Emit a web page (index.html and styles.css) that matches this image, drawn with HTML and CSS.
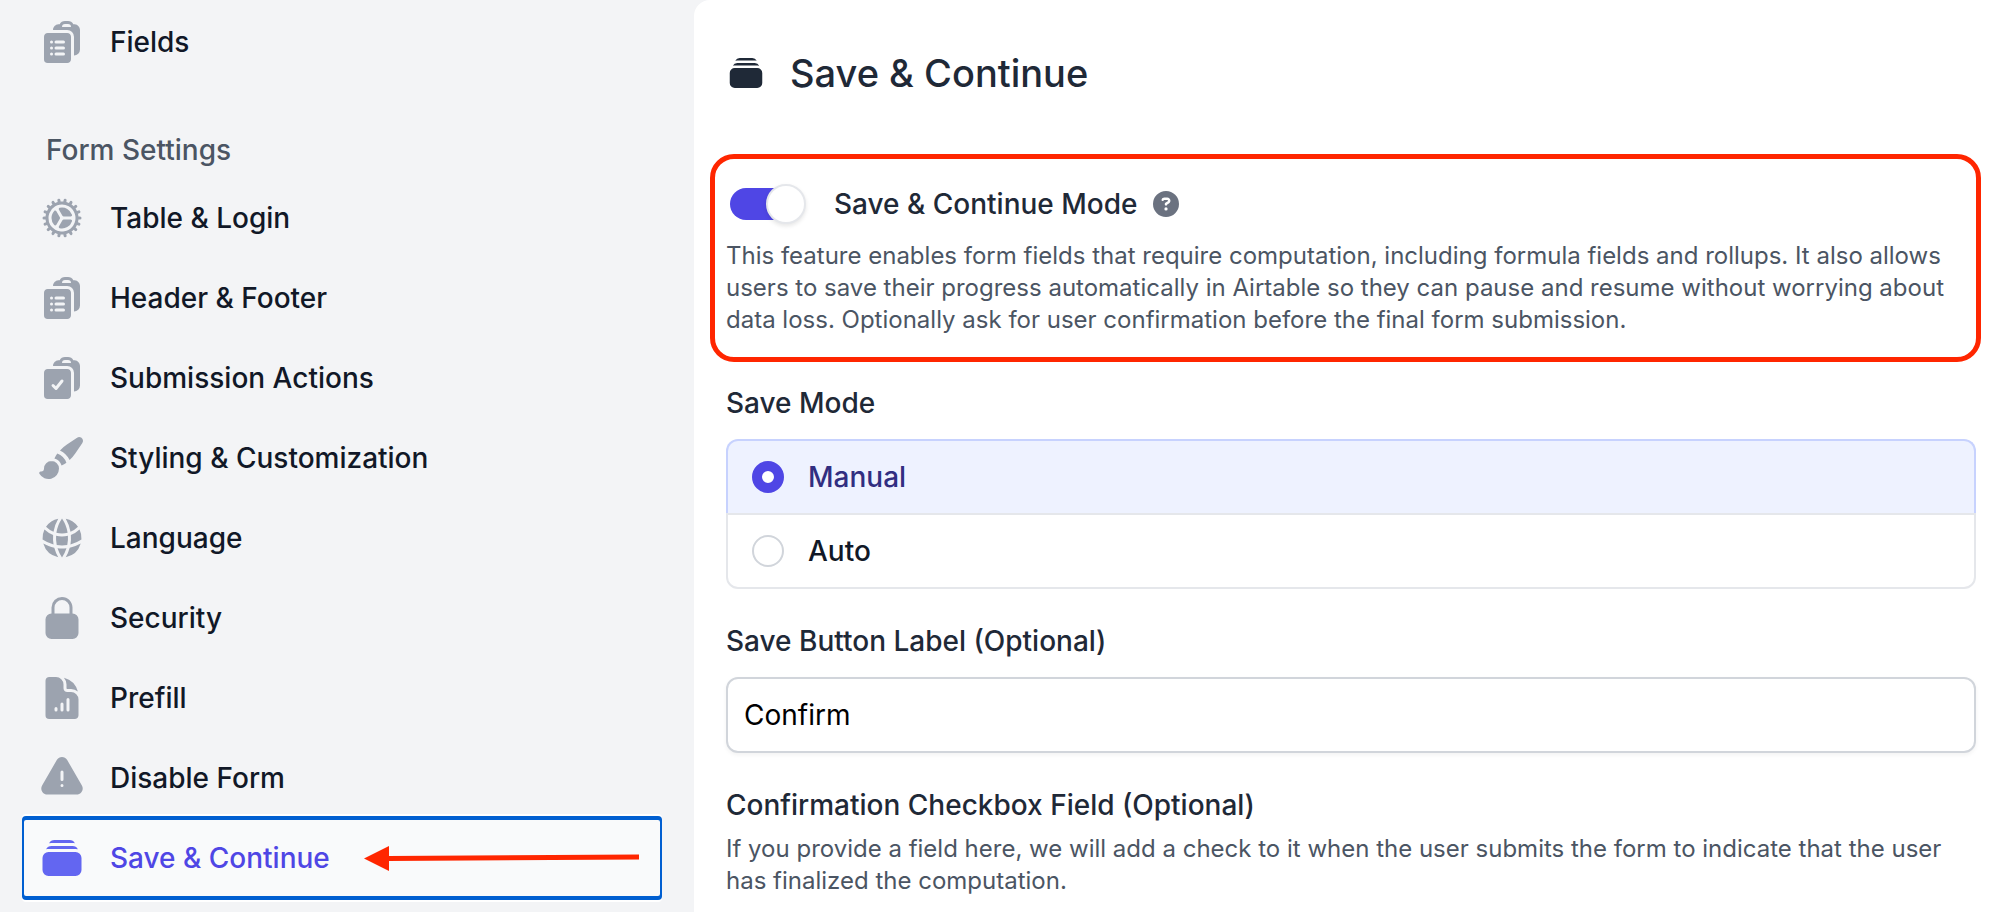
FILE: index.html
```html
<!DOCTYPE html>
<html lang="en">
<head>
<meta charset="utf-8">
<meta name="viewport" content="width=device-width, initial-scale=1">
<title>Save &amp; Continue</title>
<link rel="stylesheet" href="styles.css">
</head>
<body>
<svg class="sprite" aria-hidden="true">
  <symbol id="clipboard-back" viewBox="0 0 24 24"><path fill-rule="evenodd" d="M7.502 6h7.128A3.375 3.375 0 0118 9.375v9.375a3 3 0 003-3V6.108c0-1.505-1.125-2.811-2.664-2.94a48.972 48.972 0 00-.673-.05A3 3 0 0015 1.5h-1.5a3 3 0 00-2.663 1.618c-.225.015-.45.032-.673.05C8.662 3.295 7.554 4.542 7.502 6zM13.5 3A1.5 1.5 0 0012 4.5h4.5A1.5 1.5 0 0015 3h-1.5z"/></symbol>
  <symbol id="clipboard-list" viewBox="0 0 24 24"><use href="#clipboard-back"/><path fill-rule="evenodd" d="M3 9.375C3 8.339 3.84 7.5 4.875 7.5h9.75c1.036 0 1.875.84 1.875 1.875v11.25c0 1.035-.84 1.875-1.875 1.875h-9.75A1.875 1.875 0 013 20.625V9.375zM6 12a.75.75 0 01.75-.75h.008a.75.75 0 01.75.75v.008a.75.75 0 01-.75.75H6.75a.75.75 0 01-.75-.75V12zm2.25 0a.75.75 0 01.75-.75h3.75a.75.75 0 010 1.5H9a.75.75 0 01-.75-.75zM6 15a.75.75 0 01.75-.75h.008a.75.75 0 01.75.75v.008a.75.75 0 01-.75.75H6.75a.75.75 0 01-.75-.75V15zm2.25 0a.75.75 0 01.75-.75h3.75a.75.75 0 010 1.5H9a.75.75 0 01-.75-.75zM6 18a.75.75 0 01.75-.75h.008a.75.75 0 01.75.75v.008a.75.75 0 01-.75.75H6.75a.75.75 0 01-.75-.75V18zm2.25 0a.75.75 0 01.75-.75h3.75a.75.75 0 010 1.5H9a.75.75 0 01-.75-.75z"/></symbol>
  <symbol id="clipboard-check" viewBox="0 0 24 24"><use href="#clipboard-back"/><path fill-rule="evenodd" d="M3 9.375C3 8.339 3.84 7.5 4.875 7.5h9.75c1.036 0 1.875.84 1.875 1.875v11.25c0 1.035-.84 1.875-1.875 1.875h-9.75A1.875 1.875 0 013 20.625V9.375zm9.586 4.594a.75.75 0 00-1.172-.938l-2.476 3.096-.908-.907a.75.75 0 00-1.06 1.06l1.5 1.5a.75.75 0 001.116-.062l3-3.75z"/></symbol>
  <symbol id="cog" viewBox="0 0 24 24"><path d="M17.004 10.407c.138.435-.216.842-.672.842h-3.465a.75.75 0 01-.65-.375l-1.732-3c-.229-.396-.053-.907.393-1.004a5.252 5.252 0 016.126 3.537zM8.12 8.464c.307-.338.838-.235 1.066.16l1.732 3a.75.75 0 010 .75l-1.732 3.001c-.229.396-.76.498-1.067.16A5.231 5.231 0 016.75 12c0-1.362.519-2.603 1.37-3.536zM10.878 17.13c-.447-.097-.623-.608-.394-1.003l1.733-3.003a.75.75 0 01.65-.375h3.465c.457 0 .81.408.672.843a5.252 5.252 0 01-6.126 3.538z"/><path fill-rule="evenodd" d="M21 12.75a.75.75 0 100-1.5h-.783a8.22 8.22 0 00-.237-1.357l.734-.267a.75.75 0 10-.513-1.41l-.735.268a8.24 8.24 0 00-.689-1.191l.6-.504a.75.75 0 10-.964-1.149l-.6.504a8.3 8.3 0 00-1.054-.885l.391-.678a.75.75 0 10-1.299-.75l-.39.677a8.188 8.188 0 00-1.295-.471l.136-.77a.75.75 0 00-1.477-.26l-.136.77a8.364 8.364 0 00-1.377 0l-.136-.77a.75.75 0 10-1.477.26l.136.77c-.448.121-.88.28-1.294.47l-.39-.676a.75.75 0 00-1.3.75l.392.678a8.29 8.29 0 00-1.054.885l-.6-.504a.75.75 0 00-.965 1.149l.6.503a8.243 8.243 0 00-.689 1.192L3.8 8.217a.75.75 0 10-.513 1.41l.735.267a8.222 8.222 0 00-.238 1.355h-.783a.75.75 0 000 1.5h.783c.042.464.122.917.238 1.356l-.735.268a.75.75 0 10.513 1.41l.735-.268c.197.417.428.816.69 1.192l-.6.504a.75.75 0 10.963 1.149l.601-.505c.326.323.679.62 1.054.885l-.392.68a.75.75 0 101.3.75l.39-.679c.414.192.847.35 1.294.471l-.136.771a.75.75 0 101.477.26l.137-.772a8.376 8.376 0 001.376 0l.136.773a.75.75 0 101.477-.26l-.136-.772a8.19 8.19 0 001.294-.47l.391.677a.75.75 0 101.3-.75l-.393-.679a8.282 8.282 0 001.054-.885l.601.504a.75.75 0 10.964-1.15l-.6-.503a8.24 8.24 0 00.69-1.191l.735.268a.75.75 0 10.512-1.41l-.734-.268c.115-.438.195-.892.237-1.356h.784zm-2.657-3.06a6.744 6.744 0 00-1.19-2.053 6.784 6.784 0 00-1.82-1.51A6.704 6.704 0 0012 5.25a6.801 6.801 0 00-1.225.111 6.7 6.7 0 00-2.15.792 6.784 6.784 0 00-2.952 3.489.758.758 0 01-.036.099A6.74 6.74 0 005.251 12a6.739 6.739 0 003.355 5.835l.01.006.01.005a6.706 6.706 0 002.203.802c.007 0 .014.002.021.004a6.792 6.792 0 002.301 0l.022-.004a6.707 6.707 0 002.228-.816 6.781 6.781 0 001.762-1.483l.009-.01.009-.012a6.744 6.744 0 001.18-2.064c.253-.708.39-1.47.39-2.264a6.74 6.74 0 00-.408-2.308z"/></symbol>
  <symbol id="brush" viewBox="0 0 24 24"><path d="M20.599 1.5c-.376 0-.743.111-1.055.32l-5.08 3.385a18.747 18.747 0 00-3.471 2.987 10.04 10.04 0 014.815 4.815 18.748 18.748 0 002.987-3.472l3.386-5.079A1.902 1.902 0 0020.599 1.5zm-8.3 14.025a18.76 18.76 0 001.896-1.207 8.026 8.026 0 00-4.513-4.513A18.75 18.75 0 008.475 11.7l-.278.5a5.26 5.26 0 013.601 3.602l.502-.278zM6.75 13.5A3.75 3.75 0 003 17.25a1.5 1.5 0 01-1.601 1.497.75.75 0 00-.7 1.123 5.25 5.25 0 009.8-2.62 3.75 3.75 0 00-3.75-3.75z"/></symbol>
  <symbol id="globe" viewBox="0 0 24 24"><path d="M21.721 12.752a9.711 9.711 0 00-.945-5.003 12.754 12.754 0 01-4.339 2.708 18.991 18.991 0 01-.214 4.772 17.165 17.165 0 005.498-2.477zM14.634 15.55a17.324 17.324 0 00.332-4.647c-.952.227-1.945.347-2.966.347-1.021 0-2.014-.12-2.966-.347a17.515 17.515 0 00.332 4.647 17.385 17.385 0 005.268 0zM9.772 17.119a18.963 18.963 0 004.456 0A17.182 17.182 0 0112 21.724a17.18 17.18 0 01-2.228-4.605zM7.777 15.23a18.87 18.87 0 01-.214-4.774 12.753 12.753 0 01-4.34-2.708 9.711 9.711 0 00-.944 5.004 17.165 17.165 0 005.498 2.477zM21.356 14.752a9.765 9.765 0 01-7.478 6.817 18.64 18.64 0 001.988-4.718 18.627 18.627 0 005.49-2.098zM2.644 14.752c1.682.971 3.53 1.688 5.49 2.099a18.64 18.64 0 001.988 4.718 9.765 9.765 0 01-7.478-6.816zM13.878 2.43a9.755 9.755 0 016.116 3.986 11.267 11.267 0 01-3.746 2.504 18.63 18.63 0 00-2.37-6.49zM12 2.276a17.152 17.152 0 012.805 7.121c-.897.23-1.837.353-2.805.353-.968 0-1.908-.122-2.805-.353A17.151 17.151 0 0112 2.276zM10.122 2.43a18.629 18.629 0 00-2.37 6.49 11.266 11.266 0 01-3.746-2.504 9.754 9.754 0 016.116-3.985z"/></symbol>
  <symbol id="lock" viewBox="0 0 24 24"><path fill-rule="evenodd" d="M12 1.5a5.25 5.25 0 00-5.25 5.25v3a3 3 0 00-3 3v6.75a3 3 0 003 3h10.5a3 3 0 003-3v-6.75a3 3 0 00-3-3v-3c0-2.9-2.35-5.25-5.25-5.25zm3.75 8.25v-3a3.75 3.75 0 10-7.5 0v3h7.5z"/></symbol>
  <symbol id="chart" viewBox="0 0 24 24"><path fill-rule="evenodd" d="M5.625 1.5H9a3.75 3.75 0 013.75 3.75v1.875c0 1.036.84 1.875 1.875 1.875H16.5a3.75 3.75 0 013.75 3.75v7.875c0 1.035-.84 1.875-1.875 1.875H5.625a1.875 1.875 0 01-1.875-1.875V3.375c0-1.036.84-1.875 1.875-1.875zM9.75 17.25a.75.75 0 00-1.5 0V18a.75.75 0 001.5 0v-.75zm2.25-3a.75.75 0 01.75.75v3a.75.75 0 01-1.5 0v-3a.75.75 0 01.75-.75zm3.75-1.5a.75.75 0 00-1.5 0V18a.75.75 0 001.5 0v-5.25z"/><path d="M14.25 5.25a5.23 5.23 0 00-1.279-3.434 9.768 9.768 0 016.963 6.963A5.23 5.23 0 0016.5 7.5h-1.875a.375.375 0 01-.375-.375V5.25z"/></symbol>
  <symbol id="warning" viewBox="0 0 24 24"><path fill-rule="evenodd" d="M9.401 3.003c1.155-2 4.043-2 5.197 0l7.355 12.748c1.154 2-.29 4.5-2.599 4.5H4.645c-2.309 0-3.752-2.5-2.598-4.5L9.4 3.003zM12 8.25a.75.75 0 01.75.75v3.75a.75.75 0 01-1.5 0V9a.75.75 0 01.75-.75zm0 8.25a.75.75 0 100-1.5.75.75 0 000 1.5z"/></symbol>
  <symbol id="stack" viewBox="0 0 24 24"><path d="M5.566 4.657A4.505 4.505 0 016.75 4.5h10.5c.41 0 .806.055 1.183.157A3 3 0 0015.75 3h-7.5a3 3 0 00-2.684 1.657zM2.25 12a3 3 0 013-3h13.5a3 3 0 013 3v6a3 3 0 01-3 3H5.25a3 3 0 01-3-3v-6zM5.25 7.5c-.41 0-.806.055-1.184.157A3 3 0 016.75 6h10.5a3 3 0 012.683 1.657A4.505 4.505 0 0018.75 7.5H5.25z"/></symbol>
  <symbol id="question" viewBox="0 0 512 512"><path d="M256 512A256 256 0 1 0 256 0a256 256 0 1 0 0 512zM169.800 165.300c7.900-22.300 29.100-37.300 52.800-37.300h58.300c34.900 0 63.100 28.300 63.100 63.100c0 22.600-12.100 43.500-31.700 54.800L280 264.400c-.2 13-10.900 23.600-24 23.600c-13.300 0-24-10.700-24-24V250.500c0-8.600 4.600-16.500 12.100-20.800l44.300-25.400c4.700-2.700 7.600-7.700 7.600-13.100c0-8.400-6.800-15.100-15.100-15.100H222.600c-3.400 0-6.400 2.100-7.500 5.300l-.4 1.200c-4.400 12.500-18.200 19-30.600 14.600s-19-18.200-14.600-30.600l.4-1.200zM224 352a32 32 0 1 1 64 0 32 32 0 1 1 -64 0z"/></symbol>
</svg>
<div class="app">
  <nav class="sidebar" aria-label="Form">
    <a class="nav-item" href="#fields"><svg class="icon"><use href="#clipboard-list"/></svg>Fields</a>
    <h2 class="nav-heading">Form Settings</h2>
    <a class="nav-item" href="#table"><svg class="icon"><use href="#cog"/></svg>Table &amp; Login</a>
    <a class="nav-item" href="#header"><svg class="icon"><use href="#clipboard-list"/></svg>Header &amp; Footer</a>
    <a class="nav-item" href="#submission"><svg class="icon"><use href="#clipboard-check"/></svg>Submission Actions</a>
    <a class="nav-item" href="#styling"><svg class="icon"><use href="#brush"/></svg>Styling &amp; Customization</a>
    <a class="nav-item" href="#language"><svg class="icon"><use href="#globe"/></svg>Language</a>
    <a class="nav-item" href="#security"><svg class="icon"><use href="#lock"/></svg>Security</a>
    <a class="nav-item" href="#prefill"><svg class="icon"><use href="#chart"/></svg>Prefill</a>
    <a class="nav-item" href="#disable"><svg class="icon"><use href="#warning"/></svg>Disable Form</a>
    <a class="nav-item current" href="#save" aria-current="page"><svg class="icon"><use href="#stack"/></svg>Save &amp; Continue
      <svg class="arrow" viewBox="0 0 276 26" aria-hidden="true"><path d="M24 13.500L275 12" stroke="#ff2600" stroke-width="5"/><path d="M0 13.500L25 1V26z" fill="#ff2600"/></svg>
    </a>
  </nav>
  <main class="panel">
    <header class="panel-header"><svg class="title-icon"><use href="#stack"/></svg><h1 class="title">Save &amp; Continue</h1></header>
    <section class="feature">
      <div class="feature-row">
        <input class="switch" type="checkbox" role="switch" id="mode" checked>
        <label class="label" for="mode">Save &amp; Continue Mode</label>
        <button class="help" type="button" aria-label="Help"><svg class="help-icon"><use href="#question"/></svg></button>
      </div>
      <p class="description">This feature enables form fields that require computation, including formula fields and rollups. It also allows users to save their progress automatically in Airtable so they can pause and resume without worrying about data loss. Optionally ask for user confirmation before the final form submission.</p>
    </section>
    <fieldset class="field modes">
      <legend class="label">Save Mode</legend>
      <div class="options">
        <label class="option"><input class="radio" type="radio" name="save-mode" checked>Manual</label>
        <label class="option"><input class="radio" type="radio" name="save-mode">Auto</label>
      </div>
    </fieldset>
    <div class="field">
      <label class="label" for="button-label">Save Button Label (Optional)</label>
      <input class="text-input" id="button-label" type="text" value="Confirm">
    </div>
    <section class="field">
      <h2 class="label">Confirmation Checkbox Field (Optional)</h2>
      <p class="description hint">If you provide a field here, we will add a check to it when the user submits the form to indicate that the user has finalized the computation.</p>
    </section>
  </main>
</div>
</body>
</html>
```
FILE: styles.css
```css
*,
*::before {
  box-sizing: border-box;
}

body {
  margin: 0;
  background: #f3f4f6;
  color: #1f2937;
  font-family: Inter, "Liberation Sans", sans-serif;
  font-size: 28px;
  line-height: 40px;
}

h1,
h2,
p {
  margin: 0;
}

.sprite {
  display: none;
}

.app {
  display: grid;
  grid-template-columns: minmax(0, 694fr) minmax(0, 1306fr);
  min-height: 100vh;
}

.sidebar {
  display: flex;
  flex-direction: column;
  padding: 2px 32px 8px 22px;
}

.nav-item {
  display: flex;
  align-items: center;
  gap: 24px;
  min-height: 80px;
  padding: 0 16px;
  color: #111827;
  font-weight: 500;
  text-decoration: none;
}

.icon {
  flex: none;
  width: 48px;
  height: 48px;
  fill: #9ca3af;
}

.nav-heading {
  margin: 48px 0 8px;
  padding-left: 24px;
  color: #4b5563;
  font-size: 28px;
  font-weight: 500;
  line-height: 40px;
}

.current {
  padding: 0 14px;
  border: 2px solid #005fd1;
  border-radius: 4px;
  background: #f9fafb;
  box-shadow: 0 -2px #005fd1, 0 2px #005fd1, 0 -4px #fff, 0 4px #fff;
  color: #4f46e5;
}

.current .icon {
  fill: #6366f1;
}

.arrow {
  flex: 0 1 276px;
  min-width: 0;
  height: 32px;
  margin-left: 10px;
}

.panel {
  padding: 48px 24px 16px 32px;
  border-top-left-radius: 16px;
  background: #fff;
}

.panel-header {
  display: flex;
  align-items: center;
  gap: 24px;
}

.title-icon {
  flex: none;
  width: 40px;
  height: 40px;
  fill: #1f2937;
}

.title {
  font-size: 38px;
  font-weight: 500;
  line-height: 50px;
}

.feature {
  margin: 56px -5px 0 -16px;
  padding: 21px 12px 21px 11px;
  border: 5px solid #ff2600;
  border-radius: 24px;
}

.feature-row {
  display: flex;
  align-items: center;
  gap: 16px;
  min-height: 48px;
  margin-bottom: 12px;
}

.switch {
  appearance: none;
  flex: none;
  display: flex;
  align-items: center;
  justify-content: flex-end;
  width: 76px;
  height: 32px;
  margin: 0 12px 0 4px;
  border-radius: 16px;
  background: linear-gradient(#4f46e5, #4f46e5) left / 56px 100% no-repeat;
}

.switch::before {
  content: "";
  width: 40px;
  height: 40px;
  border: 2px solid #e5e7eb;
  border-radius: 50%;
  background: #fff;
  box-shadow: 0 2px 4px rgb(0 0 0 / 10%);
}

.label {
  color: #1f2937;
  font-size: 28px;
  font-weight: 500;
  line-height: 40px;
}

.help {
  display: flex;
  padding: 0;
  border: 0;
  background: none;
}

.help-icon {
  width: 26px;
  height: 26px;
  fill: #6b7280;
}

.description {
  color: #4b5563;
  font-size: 24px;
  line-height: 32px;
}

.field {
  margin: 32px 0 0;
  padding: 0;
  border: 0;
}

.modes {
  margin-top: 21px;
}

.modes .label {
  padding: 0;
}

.hint {
  margin-top: 8px;
}

.options {
  margin-top: 16px;
}

.option {
  display: flex;
  align-items: center;
  gap: 24px;
  min-height: 76px;
  padding: 0 24px;
  border: 2px solid #e5e7eb;
  color: #111827;
  font-weight: 500;
}

.option + .option {
  margin-top: -2px;
}

.option:first-child {
  border-color: #c7d2fe #c7d2fe #e5e7eb;
  border-radius: 12px 12px 0 0;
}

.option:last-child {
  border-radius: 0 0 12px 12px;
}

.option:has(:checked) {
  background: #eef2ff;
  color: #312e81;
}

.radio {
  appearance: none;
  width: 32px;
  height: 32px;
  margin: 0;
  border: 2px solid #d1d5db;
  border-radius: 50%;
  background: #fff;
}

.radio:checked {
  border: 10px solid #4f46e5;
}

.text-input {
  display: block;
  width: 100%;
  height: 76px;
  margin-top: 16px;
  padding: 0 16px;
  border: 2px solid #d1d5db;
  border-radius: 12px;
  background: #fff;
  box-shadow: 0 2px 4px rgb(0 0 0 / 5%);
  color: #000;
  font: inherit;
}
```
